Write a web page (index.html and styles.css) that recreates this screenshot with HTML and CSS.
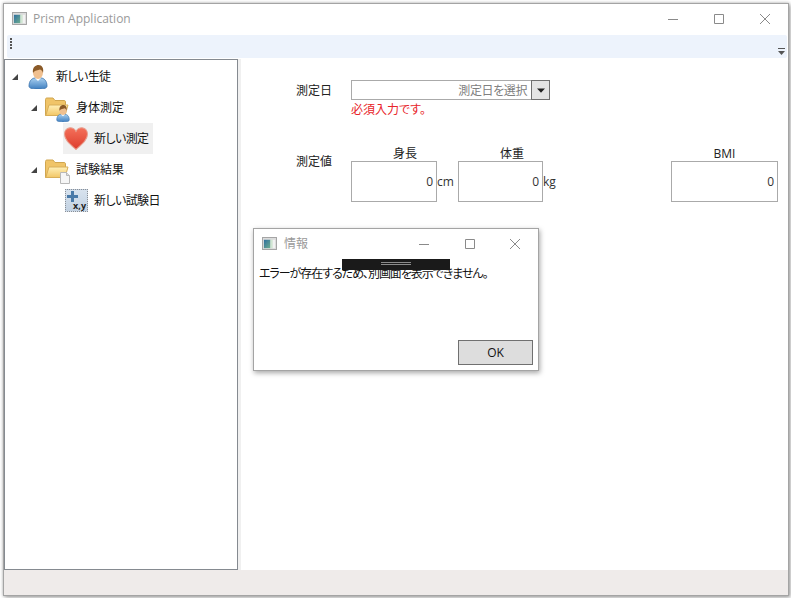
FILE: index.html
```html
<!DOCTYPE html>
<html lang="ja">
<head>
<meta charset="utf-8">
<title>Prism Application</title>
<link rel="stylesheet" href="styles.css">
</head>
<body>
<svg class="defs" width="0" height="0" aria-hidden="true">
  <defs>
    <linearGradient id="gBody" x1="0" y1="0" x2="0" y2="1"><stop offset="0" stop-color="#a9d0f0"/><stop offset="1" stop-color="#3f7fc0"/></linearGradient>
    <linearGradient id="gFolder" x1="0" y1="0" x2="0" y2="1"><stop offset="0" stop-color="#fff0b8"/><stop offset="1" stop-color="#f2c665"/></linearGradient>
    <linearGradient id="gHeart" x1="0" y1="0" x2="0" y2="1"><stop offset="0" stop-color="#f4705a"/><stop offset="1" stop-color="#dd3c2c"/></linearGradient>
    <linearGradient id="gApp" x1="0" y1="0" x2="1" y2="1"><stop offset="0" stop-color="#2f6f9f"/><stop offset="1" stop-color="#6fae8f"/></linearGradient>
    <symbol id="appicon" viewBox="0 0 16 14">
      <rect x=".5" y=".5" width="15" height="13" fill="#dcdcdc" stroke="#a0a0a0"/>
      <rect x="2" y="3" width="7" height="9" fill="url(#gApp)"/>
      <rect x="9" y="3" width="2.500" height="9" fill="#cfe6d2"/>
      <rect x="11.500" y="3" width="2.500" height="9" fill="#f2f2f2"/>
    </symbol>
    <symbol id="person" viewBox="0 0 20 24">
      <path d="M1 21c0-5 3-8 6-8h6c3 0 6 3 6 8 0 2-2 3-9 3s-9-1-9-3z" fill="url(#gBody)" stroke="#3a72ad" stroke-width=".8"/>
      <path d="M7 13l3 3 3-3z" fill="#fff"/>
      <ellipse cx="10" cy="7.500" rx="5" ry="6.500" fill="#f0c090"/>
      <path d="M5 8C4 2 8 0 10.500 0 14 0 16 3 15 8c-.5-2-1.500-3-3-3.500C10 5.500 7 5 5 8z" fill="#8a5a28"/>
    </symbol>
    <symbol id="folder" viewBox="0 0 24 22">
      <path d="M.5 2.500C.5 1.500 1 1 2 1h6l2 2.500h9c1 0 1.500.5 1.500 1.500v13.500H.5z" fill="#f0c468" stroke="#d0a650"/>
      <path d="M.8 18.500L4 8h19l-3 10.500z" fill="url(#gFolder)" stroke="#d8ae58"/>
    </symbol>
  </defs>
</svg>
<div class="window">
  <header class="titlebar">
    <svg class="appicon"><use href="#appicon"/></svg>
    <span class="title">Prism Application</span>
    <div class="controls">
      <svg class="ctl" viewBox="0 0 12 12"><path d="M1 6.500h10" /></svg>
      <svg class="ctl" viewBox="0 0 12 12"><path d="M1.500 1.500h9v9h-9z" /></svg>
      <svg class="ctl" viewBox="0 0 12 12"><path d="M1 1l10 10M11 1L1 11" /></svg>
    </div>
  </header>
  <div class="toolbar">
    <span class="grip"><i></i><i></i><i></i><i></i></span>
    <svg class="overflow" viewBox="0 0 7 7"><path d="M0 0h7v1H0z" fill="#555"/><path d="M0 3h7L3.500 7z" fill="#555"/></svg>
  </div>
  <div class="main">
    <nav class="tree">
      <div class="row lv0">
        <span class="arrow"></span>
        <svg class="ico person"><use href="#person"/></svg>
        <span class="tight">新しい生徒</span>
      </div>
      <div class="row lv1">
        <span class="arrow"></span>
        <span class="ico stack">
          <svg class="folder"><use href="#folder"/></svg>
          <svg class="badge-person"><use href="#person"/></svg>
        </span>
        <span>身体測定</span>
      </div>
      <div class="row lv2 selected">
        <svg class="ico heart" viewBox="0 0 24 22" preserveAspectRatio="none"><path d="M12 21.500C6 16.500.5 12.500.5 6.800.5 3 3.300.8 6.300.8c2.500 0 4.500 1.200 5.700 3.400C13.200 2 15.200.8 17.700.8c3 0 5.800 2.200 5.800 6 0 5.700-5.500 9.700-11.500 14.700z" fill="url(#gHeart)" stroke="#e8a090"/></svg>
        <span class="tight">新しい測定</span>
      </div>
      <div class="row lv1">
        <span class="arrow"></span>
        <span class="ico stack">
          <svg class="folder"><use href="#folder"/></svg>
          <svg class="badge-doc" viewBox="0 0 10 12"><path d="M.5.500h6l3 3v8h-9z" fill="#f6f6f6" stroke="#b8b8b8"/><path d="M6.500.500v3h3" fill="#ddd" stroke="#b8b8b8"/></svg>
        </span>
        <span>試験結果</span>
      </div>
      <div class="row lv2">
        <span class="formula"><svg class="plus" viewBox="0 0 11 11"><path d="M4 0h3v4h4v3H7v4H4V7H0V4h4z" fill="#4a7aa8"/></svg><b class="xy">x,y</b></span>
        <span class="tight">新しい試験日</span>
      </div>
    </nav>
    <section class="content">
      <div class="field-date">
        <label class="label">測定日</label>
        <div>
          <div class="datepicker">
            <span class="placeholder">測定日を選択</span>
            <span class="dropbtn"><svg viewBox="0 0 8 5" class="chev"><path d="M0 .5h8L4 4.800z" fill="#222"/></svg></span>
          </div>
          <div class="error">必須入力です。</div>
        </div>
      </div>
      <div class="field-values">
        <label class="label label-values">測定値</label>
        <div class="measure m-height">
          <div class="caption">身長</div>
          <div class="inputline"><div class="box">0</div><span class="unit">cm</span></div>
        </div>
        <div class="measure m-weight">
          <div class="caption">体重</div>
          <div class="inputline"><div class="box">0</div><span class="unit">kg</span></div>
        </div>
        <div class="measure m-bmi">
          <div class="caption">BMI</div>
          <div class="inputline"><div class="box">0</div></div>
        </div>
      </div>
    </section>
  </div>
  <footer class="statusbar"></footer>
</div>
<div class="dialog">
  <header class="dlg-title">
    <svg class="appicon"><use href="#appicon"/></svg>
    <span class="title">情報</span>
    <div class="dlg-controls">
      <svg class="ctl" viewBox="0 0 12 12"><path d="M1 6.500h10" /></svg>
      <svg class="ctl" viewBox="0 0 12 12"><path d="M1.500 1.500h9v9h-9z" /></svg>
      <svg class="ctl" viewBox="0 0 12 12"><path d="M1 1l10 10M11 1L1 11" /></svg>
    </div>
  </header>
  <p class="message">エラーが存在するため、別画面を表示できません。</p>
  <div class="dlg-foot"><button class="ok">OK</button></div>
  <div class="blackbar"><i></i><i></i></div>
</div>
</body>
</html>
```
FILE: styles.css
```css
html, body { margin: 0; padding: 0; background: #fff; }
body {
  width: 791px; height: 598px; overflow: hidden; position: relative;
  font: 12px/16px "Open Sans", "Noto Sans CJK JP", sans-serif;
  font-feature-settings: "palt";
  color: #111;
}
.defs { position: absolute; }
.window {
  box-sizing: border-box;
  margin: 3px 0 0 3px;
  width: 786px; height: 593px;
  border: 1px solid #a4a4a4;
  background: #fff;
  box-shadow: 0 0 3px rgba(0,0,0,.3), 2px 2px 4px rgba(0,0,0,.25);
  display: flex; flex-direction: column;
}
.titlebar {
  height: 29px; flex: none;
  display: flex; align-items: center;
  padding: 0 0 2px 8px;
}
.appicon { width: 15px; height: 13px; flex: none; }
.title { color: #9a9a9a; margin-left: 6px; }
.controls { margin-left: auto; display: flex; gap: 34px; padding-right: 17px; }
.ctl { width: 12px; height: 12px; fill: none; stroke: #8a8a8a; stroke-width: 1; display: block; }
.toolbar {
  height: 23px; flex: none;
  margin: 0 1px 1px 3px;
  background: #edf3fc;
  border-radius: 2px;
  position: relative;
  display: flex; justify-content: space-between; align-items: stretch;
}
.grip { display: flex; flex-direction: column; gap: 1px; padding: 3px 0 0 3px; }
.grip i { width: 2px; height: 2px; background: #555; display: block; }
.overflow { width: 7px; height: 7px; align-self: flex-end; margin: 0 2px 3px 0; }
.main { flex: 1; display: flex; min-height: 0; background: #f0f0f0; }
.tree {
  box-sizing: border-box;
  width: 234px; flex: none;
  border: 1px solid #858a90;
  padding-top: 1px;
  background: #fff;
}
.row { height: 31px; display: flex; align-items: center; color: #111; white-space: nowrap; }
.tight { letter-spacing: -.6px; }
.arrow {
  width: 0; height: 0; flex: none;
  border-style: solid; border-width: 0 0 6px 6px;
  border-color: transparent transparent #444 transparent;
}
.lv0 { padding-left: 7px; }
.lv0 .arrow { margin-right: 10px; }
.lv0 .ico { margin-right: 8px; }
.lv1 { padding-left: 26px; }
.lv1 .arrow { margin-right: 8px; }
.lv1 .ico { margin-right: 7px; }
.lv2 { margin-left: 58px; padding-left: 1px; width: 90px; box-sizing: border-box; }
.selected { background: #f0f0f0; }
.lv2 .ico, .lv2 .formula { margin-right: 6px; }
.ico { display: block; flex: none; }
.person { width: 20px; height: 24px; }
.stack { width: 24px; height: 24px; position: relative; }
.folder { width: 24px; height: 22px; display: block; position: absolute; left: 0; top: 1px; }
.badge-person { width: 14px; height: 17px; position: absolute; right: -1px; bottom: -2px; }
.badge-doc { width: 10px; height: 12px; position: absolute; right: -1px; bottom: -2px; }
.heart { width: 24px; height: 23px; }
.formula {
  box-sizing: border-box; position: relative; display: block;
  flex: none; width: 23px; height: 23px;
  margin-left: 1px;
  background: linear-gradient(#d7e2ee, #c3d2e2);
  border: 1px dotted #8a8f96;
}
.plus { position: absolute; left: 1px; top: 1px; width: 11px; height: 11px; }
.xy { position: absolute; right: 1px; bottom: 0; font: 700 9px/10px "Open Sans", sans-serif; color: #222; }
.content {
  flex: 1; margin-left: 3px;
  padding: 21px 0 0 55px;
  background: #fff;
  position: relative;
}
.label { display: block; width: 55px; flex: none; color: #222; }
.field-date { display: flex; align-items: flex-start; }
.field-date .label { padding-top: 3px; }
.datepicker {
  box-sizing: border-box; width: 199px; height: 20px;
  border: 1px solid #aaa; border-right: 0;
  display: flex; align-items: stretch;
}
.placeholder { flex: 1; text-align: right; padding-right: 4px; color: #808080; line-height: 19px; letter-spacing: -.4px; }
.dropbtn {
  box-sizing: border-box; width: 19px; flex: none; margin: -1px 0;
  background: #e4e4e4; border: 1px solid #707070;
  display: flex; align-items: center; justify-content: center;
}
.chev { width: 8px; height: 5px; }
.error { color: #e8252a; height: 18px; line-height: 18px; padding-top: 1px; }
.field-values { display: flex; align-items: flex-start; margin-top: 25px; }
.label-values { padding-top: 10px; }
.caption { text-align: center; height: 17px; line-height: 20px; color: #222; }
.inputline { display: flex; align-items: center; }
.box {
  box-sizing: border-box; height: 41px;
  border: 1px solid #aaa; background: #fff;
  text-align: right; padding: 12px 3px 0 0; color: #333;
}
.unit { color: #333; width: 21px; box-sizing: border-box; }
.m-height .box { width: 86px; }
.m-height .caption { width: 108px; }
.m-height { width: 107px; }
.m-weight .box { width: 85px; }
.m-weight .caption { width: 108px; }
.m-weight { width: 106px; }
.m-bmi { margin-left: 107px; }
.m-bmi .box { width: 107px; }
.statusbar { height: 25px; flex: none; background: #efebea; }
.dialog {
  position: absolute; left: 253px; top: 228px;
  box-sizing: border-box; width: 286px; height: 143px;
  background: #fff; border: 1px solid #a4a4a4;
  box-shadow: 1px 2px 5px rgba(0,0,0,.35);
  display: flex; flex-direction: column;
}
.dlg-title { height: 29px; padding: 0 0 1px 8px; flex: none; display: flex; align-items: center; }
.dlg-title .title { margin-left: 7px; }
.dlg-controls { margin-left: auto; display: flex; gap: 33.5px; padding-right: 17px; }
.message { margin: 7px 0 0 5px; color: #111; white-space: nowrap; letter-spacing: -1.05px; }
.dlg-foot { margin-top: auto; display: flex; justify-content: flex-end; padding: 0 5px 5px 0; }
.ok {
  width: 75px; height: 25px; padding: 0;
  background: #ddd; border: 1px solid #707070;
  font: 12px "Open Sans", sans-serif; color: #111;
}
.blackbar {
  position: absolute; left: 88px; top: 30px; width: 108px; height: 11px;
  background: #1a1a1a;
  display: flex; flex-direction: column; align-items: center; gap: 1px; padding-top: 3px; box-sizing: border-box;
}
.blackbar i { display: block; width: 30px; height: 1px; background: #8a8a8a; }
```
